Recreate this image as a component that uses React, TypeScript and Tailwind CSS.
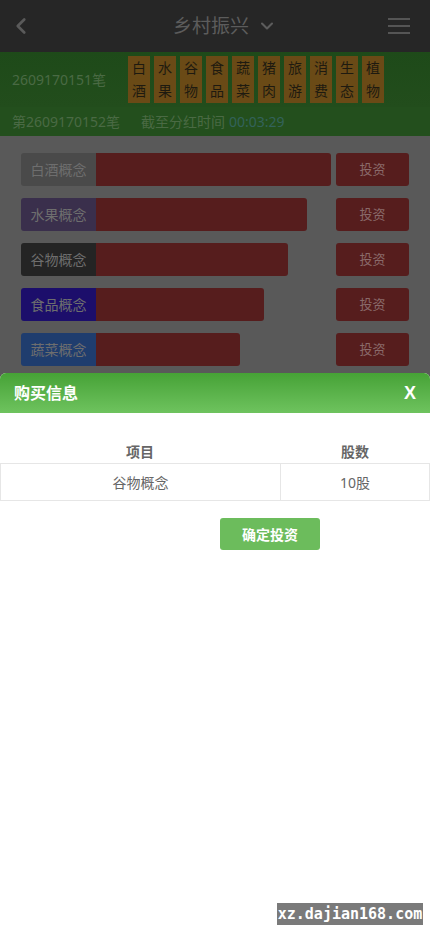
import { ChevronLeft, ChevronDown } from "lucide-react";

const tiles = [
    ["白", "酒"],
    ["水", "果"],
    ["谷", "物"],
    ["食", "品"],
    ["蔬", "菜"],
    ["猪", "肉"],
    ["旅", "游"],
    ["消", "费"],
    ["生", "态"],
    ["植", "物"],
];

const rows = [
    { name: "白酒概念", label: "bg-[#4a4a4a]", bar: "w-[310px]" },
    { name: "水果概念", label: "bg-[#3a2f4c]", bar: "w-[286px]" },
    { name: "谷物概念", label: "bg-[#242424]", bar: "w-[267px]" },
    { name: "食品概念", label: "bg-[#1c0e6b]", bar: "w-[243px]" },
    { name: "蔬菜概念", label: "bg-[#1f3d6e]", bar: "w-[219px]" },
];

export default function App() {
    return (
        <div
            className="relative h-[932px] w-[430px] overflow-hidden bg-[#595959]"
            style={{ fontFamily: '"Noto Sans", "Noto Sans CJK SC", sans-serif' }}
        >
            {/* top bar */}
            <div className="flex h-[52px] items-center justify-between bg-[#262626] px-2">
                <ChevronLeft size={26} strokeWidth={2.5} className="text-[#5a5a5a]" />
                <div className="ml-7 flex items-center gap-2 text-[19px] text-[#5c5c5c]">
                    <span>乡村振兴</span>
                    <ChevronDown size={20} strokeWidth={2.5} />
                </div>
                <div className="mr-3 flex w-[22px] flex-col gap-[5px]">
                    <span className="h-[2px] bg-[#555]" />
                    <span className="h-[2px] bg-[#555]" />
                    <span className="h-[2px] bg-[#555]" />
                </div>
            </div>

            {/* green info band */}
            <div className="flex h-[55px] items-center bg-gradient-to-b from-[#1e4a19] to-[#224d1c] pl-3">
                <span className="w-[116px] text-[14px] text-[#4a6a44]">2609170151笔</span>
                <div className="flex gap-1">
                    {tiles.map((t, i) => (
                        <div
                            key={i}
                            className="flex h-[47px] w-[22px] flex-col items-center justify-around bg-[#6a4a16] text-[14px] leading-none text-[#1e1a10]"
                        >
                            <span>{t[0]}</span>
                            <span>{t[1]}</span>
                        </div>
                    ))}
                </div>
            </div>
            <div className="flex h-[29px] items-center bg-[#234f1d] pl-3 text-[14px]">
                <span className="w-[129px] text-[#4a6a44]">第2609170152笔</span>
                <span className="text-[#4a6a44]">截至分红时间</span>
                <span className="ml-1 text-[#33625a]">00:03:29</span>
            </div>

            {/* list */}
            <div className="flex flex-col gap-3 pl-[21px] pr-[21px] pt-[17px]">
                {rows.map((r) => (
                    <div key={r.name} className="flex h-[33px] justify-between">
                        <div className={`flex overflow-hidden rounded-[3px] ${r.bar}`}>
                            <div className={`flex w-[75px] items-center justify-center text-[14px] text-[#6e6e6e] ${r.label}`}>
                                {r.name}
                            </div>
                            <div className="flex-1 bg-[#561d1d]" />
                        </div>
                        <div className="flex w-[73px] items-center justify-center rounded-[3px] bg-[#561d1d] text-[13px] text-[#8a6a6a]">
                            投资
                        </div>
                    </div>
                ))}
            </div>

            {/* purchase sheet */}
            <div className="absolute inset-x-0 bottom-0 top-[373px] overflow-hidden rounded-t-[6px] bg-white">
                <div className="flex h-[40px] items-center justify-between bg-gradient-to-b from-[#46a236] to-[#6ec35e] px-[14px] text-white">
                    <span className="text-[16px] font-bold">购买信息</span>
                    <span className="text-[18px] font-bold" style={{ fontFamily: '"Liberation Sans", sans-serif' }}>
                        X
                    </span>
                </div>
                <div className="mt-[27px] grid grid-cols-[280px_1fr] text-[14px] text-[#666]">
                    <div className="flex h-[23px] items-center justify-center font-bold">项目</div>
                    <div className="flex h-[23px] items-center justify-center font-bold">股数</div>
                    <div className="flex h-[38px] items-center justify-center border border-r-0 border-[#e6e6e6]">
                        谷物概念
                    </div>
                    <div className="flex h-[38px] items-center justify-center border border-[#e6e6e6]">10股</div>
                </div>
                <div className="mt-[17px] flex pl-[220px]">
                    <div className="flex h-[32px] w-[100px] items-center justify-center rounded-[3px] bg-[#6cbc5c] text-[14px] font-bold text-white">
                        确定投资
                    </div>
                </div>
            </div>

            {/* watermark */}
            <div
                className="absolute right-[7px] top-[903px] flex h-[22px] w-[146px] items-center justify-center bg-[#7a7a7a] text-[15px] font-bold text-white"
                style={{ fontFamily: '"DejaVu Sans Mono", monospace' }}
            >
                xz.dajian168.com
            </div>
        </div>
    );
}
